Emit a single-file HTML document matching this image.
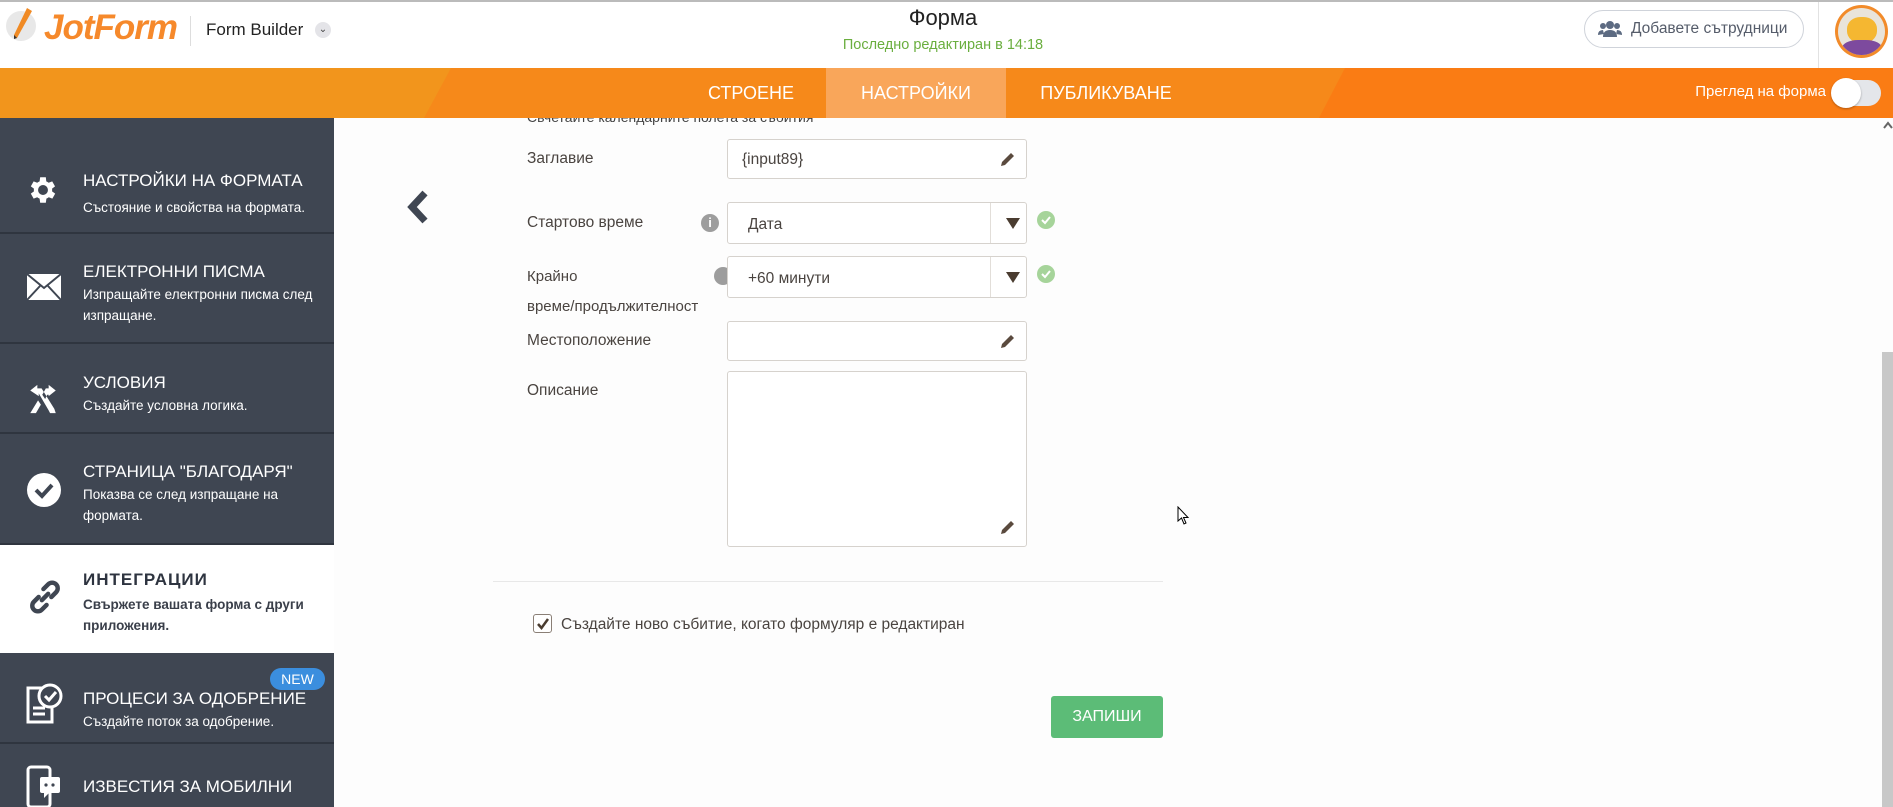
<!DOCTYPE html>
<html style="width:1893px;height:807px;overflow:hidden"><head><meta charset="utf-8"><style>
*{margin:0;padding:0;box-sizing:border-box}
body{width:1893px;height:807px;overflow:hidden;background:#fdfdfd;font-family:"Liberation Sans",sans-serif;position:relative}
.a{position:absolute}
.n{font-family:"Liberation Sans",sans-serif}
.hdr{left:0;top:0;width:1893px;height:68px;background:#fff;border-top:2px solid #bbb}
.bar{left:0;top:68px;width:1893px;height:50px;background:#f6891a;z-index:3;overflow:hidden}
.tab{top:0;height:50px;line-height:50px;color:#fff;font-size:18px;text-align:center}
.side{left:0;top:118px;width:334px;height:689px;background:#3f4652;overflow:hidden}
.it{position:absolute;left:0;width:334px;border-bottom:2px solid #2f353f;color:#fff}
.it .t{position:absolute;left:83px;font-size:17px;white-space:nowrap}
.it .s{position:absolute;left:83px;font-size:13.5px;line-height:21px;width:250px}
.ico{position:absolute;left:26px}
.lbl{color:#4a4440;font-size:15.5px;left:527px}
.inp{left:727px;width:300px;border:1px solid #d6d2cd;border-radius:3px;background:#fff}
.chk{width:18px;height:18px;border-radius:50%;background:#a6d49a}
</style></head><body>
<div class="a hdr"></div>
<svg class="a" style="left:5px;top:6px" width="34" height="38" viewBox="0 0 34 38"><circle cx="16" cy="20" r="15" fill="#e8e8e8"/><path d="M22 2 L27 5 L12 32 L9 33 L9 29 Z" fill="#f08a24"/><path d="M9 29 L12 32 L9 33Z" fill="#333"/></svg>
<div class="a" style="left:44px;top:8px;font-size:35px;font-weight:bold;font-style:italic;color:#f6892b;letter-spacing:-1px">JotForm</div>
<div class="a" style="left:190px;top:16px;width:1px;height:30px;background:#ddd"></div>
<div class="a" style="left:206px;top:20px;font-size:17px;color:#222">Form Builder</div>
<div class="a" style="left:315px;top:22px;width:16px;height:16px;border-radius:50%;background:#e4e4e8;font-size:10px;text-align:center;line-height:16px;color:#444">&#8964;</div>
<div class="a" style="left:843px;top:5px;width:200px;text-align:center;font-size:22px;color:#222">Форма</div>
<div class="a" style="left:793px;top:37px;width:300px;text-align:center;font-size:14.5px;color:#6aae3e">Последно редактиран в 14:18</div>
<div class="a" style="left:1584px;top:10px;width:220px;height:38px;border:1px solid #cfd3da;border-radius:19px;font-size:15.5px;color:#555c6a;line-height:36px;padding-left:46px;white-space:nowrap">Добавете сътрудници</div>
<svg class="a" style="left:1598px;top:20px" width="24" height="18" viewBox="0 0 24 18"><circle cx="12" cy="5" r="4" fill="#5d6b82"/><circle cx="5" cy="6" r="3" fill="#5d6b82"/><circle cx="19" cy="6" r="3" fill="#5d6b82"/><path d="M5 17 Q5 10 12 10 Q19 10 19 17Z M0 15 Q0 10 5 10 L6 14Z M24 15 Q24 10 19 10 L18 14Z" fill="#5d6b82"/></svg>
<div class="a" style="left:1818px;top:2px;width:1px;height:66px;background:#e2e2e2"></div>
<div class="a" style="left:1835px;top:5px;width:53px;height:53px;border-radius:50%;background:#f28b2a;overflow:hidden"><div class="a" style="left:3px;top:3px;width:47px;height:47px;border-radius:50%;background:#e9e4da;overflow:hidden"><div class="a" style="left:9px;top:9px;width:30px;height:26px;border-radius:45%;background:#f5b731"></div><div class="a" style="left:4px;top:32px;width:40px;height:20px;border-radius:40% 40% 0 0;background:#7d4a9e"></div></div></div>

<div class="a bar">
<svg class="a" style="left:0;top:0" width="1893" height="50"><polygon points="0,0 451,0 424,50 0,50" fill="#f2951c"/><polygon points="1345,0 1893,0 1893,50 1319,50" fill="#fa7c14"/></svg>
<div class="a tab" style="left:690px;width:122px">СТРОЕНЕ</div>
<div class="a tab" style="left:826px;width:180px;background:#f9a65a">НАСТРОЙКИ</div>
<div class="a tab" style="left:1020px;width:172px">ПУБЛИКУВАНЕ</div>
<div class="a" style="right:67px;top:15px;font-size:15px;color:#fff">Преглед на форма</div>
<div class="a" style="left:1832px;top:12px;width:49px;height:26px;border-radius:13px;background:#e4e6ea"></div>
<div class="a" style="left:1831px;top:10px;width:30px;height:30px;border-radius:50%;background:#fff;box-shadow:0 1px 2px rgba(0,0,0,.3)"></div>
</div>

<div class="a side">
<div class="it" style="top:0;height:116px;"><svg class="ico" style="top:55px" width="34" height="34" viewBox="0 0 24 24"><path fill="#fff" d="M19.4 13a7.5 7.5 0 000-2l2.1-1.6-2-3.5-2.5 1a7 7 0 00-1.7-1L15 3h-4l-.4 2.9a7 7 0 00-1.7 1l-2.5-1-2 3.5L6.6 11a7.5 7.5 0 000 2l-2.2 1.6 2 3.5 2.5-1a7 7 0 001.7 1L11 21h4l.4-2.9a7 7 0 001.7-1l2.5 1 2-3.5zM13 15.5a3.5 3.5 0 110-7 3.5 3.5 0 010 7z" transform="translate(-1 0)"/></svg><div class="t" style="top:53px">НАСТРОЙКИ НА ФОРМАТА</div><div class="s" style="top:79px">Състояние и свойства на формата.</div></div>
<div class="it" style="top:116px;height:110px"><svg class="ico" style="top:39px" width="36" height="28" viewBox="0 0 36 28"><rect x="1" y="1" width="34" height="26" fill="#fff"/><path d="M1 1 L18 15 L35 1 M1 27 L14 13 M35 27 L22 13" stroke="#3f4652" stroke-width="2" fill="none"/></svg><div class="t" style="top:28px">ЕЛЕКТРОННИ ПИСМА</div><div class="s" style="top:50px">Изпращайте електронни писма след изпращане.</div></div>
<div class="it" style="top:226px;height:90px"><svg class="ico" style="top:38px" width="34" height="34" viewBox="0 0 24 24"><path fill="#fff" d="M3 6 L8 2 V4.5 H11 L20 19 L21 22 H17 L16 20 L9 8 V10 Z M21 6 L16 2 V4.5 H14 L11.5 9 L13.5 12 L15 9 H16 V10 Z M3 22 H7 L10.5 16 L8.5 13 Z"/></svg><div class="t" style="top:29px">УСЛОВИЯ</div><div class="s" style="top:51px">Създайте условна логика.</div></div>
<div class="it" style="top:316px;height:111px"><svg class="ico" style="top:38px" width="36" height="36" viewBox="0 0 36 36"><circle cx="18" cy="18" r="17" fill="#fff"/><path d="M10 18 L16 24 L26 13" stroke="#3f4652" stroke-width="4" fill="none"/></svg><div class="t" style="top:28px">СТРАНИЦА "БЛАГОДАРЯ"</div><div class="s" style="top:50px">Показва се след изпращане на формата.</div></div>
<div class="it" style="top:427px;height:108px;background:#fff;color:#2e3440;border-bottom:none"><svg class="ico" style="top:33px" width="38" height="38" viewBox="0 0 24 24"><g fill="none" stroke="#3f4652" stroke-width="2.8" stroke-linecap="round"><path d="M10 14 L14 10"/><path d="M11 7 L14 4 a3.5 3.5 0 015 5 L16 12"/><path d="M13 17 L10 20 a3.5 3.5 0 01-5-5 L8 12"/></g></svg><div class="t" style="top:25px;font-weight:bold;letter-spacing:1px">ИНТЕГРАЦИИ</div><div class="s" style="top:49px;font-weight:bold;color:#3a3f4a">Свържете вашата форма с други приложения.</div></div>
<div class="it" style="top:535px;height:91px"><svg class="ico" style="top:29px" width="38" height="42" viewBox="0 0 38 42"><rect x="2" y="6" width="24" height="34" fill="none" stroke="#fff" stroke-width="3"/><path d="M7 26h12M7 32h12" stroke="#fff" stroke-width="3"/><circle cx="24" cy="14" r="11" fill="#3f4652" stroke="#fff" stroke-width="3"/><path d="M19 14 L23 18 L30 10" stroke="#fff" stroke-width="3" fill="none"/></svg><div class="t" style="top:36px">ПРОЦЕСИ ЗА ОДОБРЕНИЕ</div><div class="s" style="top:58px">Създайте поток за одобрение.</div>
<div class="a" style="left:270px;top:15px;width:55px;height:22px;border-radius:11px;background:#3b8ede;color:#fff;font-size:14px;text-align:center;line-height:22px">NEW</div></div>
<div class="it" style="top:626px;height:80px;border:none"><svg class="ico" style="top:21px" width="36" height="42" viewBox="0 0 36 42"><rect x="2" y="2" width="22" height="40" rx="3" fill="none" stroke="#fff" stroke-width="3"/><rect x="14" y="12" width="20" height="16" rx="2" fill="#fff"/><path d="M18 28 L18 33 L23 28Z" fill="#fff"/><circle cx="20" cy="20" r="1.6" fill="#3f4652"/><circle cx="27" cy="20" r="1.6" fill="#3f4652"/></svg><div class="t" style="top:26px;line-height:34px">ИЗВЕСТИЯ ЗА МОБИЛНИ<br>УСТРОЙСТВА</div></div>
</div>

<div class="a n" style="left:527px;top:109px;font-size:14px;color:#444;z-index:2">Свчетайте календарните полета за събития</div>
<svg class="a" style="left:405px;top:190px" width="26" height="34" viewBox="0 0 26 34"><path d="M20 3 L7 17 L20 31" stroke="#3f4652" stroke-width="7" fill="none"/></svg>

<div class="a lbl n" style="top:150px">Заглавие</div>
<div class="a inp" style="top:139px;height:40px"><span class="a n" style="left:14px;top:11px;font-size:15.5px;color:#4a4440">{input89}</span><svg class="a" style="right:10px;top:11px" width="17" height="17" viewBox="0 0 17 17"><path d="M2 15 L3 11 L12 2 L15 5 L6 14Z" fill="#5a4a3e"/></svg></div>

<div class="a lbl n" style="top:214px">Стартово време</div>
<div class="a" style="left:701px;top:214px;width:18px;height:18px;border-radius:50%;background:#9d9d9d;color:#fff;font-size:13px;font-weight:bold;text-align:center;line-height:18px">i</div>
<div class="a inp" style="top:202px;height:42px"><span class="a n" style="left:20px;top:13px;font-size:15.5px;color:#4a4440">Дата</span><div class="a" style="left:262px;top:0;width:1px;height:40px;background:#e2ded9"></div><div class="a" style="left:278px;top:15px;width:0;height:0;border-left:7px solid transparent;border-right:7px solid transparent;border-top:11px solid #4a3c30"></div></div>
<div class="a chk" style="left:1037px;top:211px"></div><svg class="a" style="left:1037px;top:211px" width="18" height="18"><path d="M5 9 L8 12 L13 6" stroke="#fff" stroke-width="2" fill="none"/></svg>

<div class="a lbl n" style="top:262px;line-height:30px;font-size:15px">Крайно<br>време/продължителност</div>
<div class="a" style="left:714px;top:267px;width:18px;height:18px;border-radius:50%;background:#9d9d9d"></div>
<div class="a inp" style="top:256px;height:42px"><span class="a n" style="left:20px;top:13px;font-size:15.5px;color:#4a4440">+60 минути</span><div class="a" style="left:262px;top:0;width:1px;height:40px;background:#e2ded9"></div><div class="a" style="left:278px;top:15px;width:0;height:0;border-left:7px solid transparent;border-right:7px solid transparent;border-top:11px solid #4a3c30"></div></div>
<div class="a chk" style="left:1037px;top:265px"></div><svg class="a" style="left:1037px;top:265px" width="18" height="18"><path d="M5 9 L8 12 L13 6" stroke="#fff" stroke-width="2" fill="none"/></svg>

<div class="a lbl n" style="top:332px">Местоположение</div>
<div class="a inp" style="top:321px;height:40px"><svg class="a" style="right:10px;top:11px" width="17" height="17" viewBox="0 0 17 17"><path d="M2 15 L3 11 L12 2 L15 5 L6 14Z" fill="#5a4a3e"/></svg></div>

<div class="a lbl n" style="top:382px">Описание</div>
<div class="a inp" style="top:371px;height:176px"><svg class="a" style="right:10px;bottom:10px" width="17" height="17" viewBox="0 0 17 17"><path d="M2 15 L3 11 L12 2 L15 5 L6 14Z" fill="#5a4a3e"/></svg></div>

<div class="a" style="left:493px;top:581px;width:670px;height:1px;background:#e8e8e8"></div>
<div class="a" style="left:533px;top:614px;width:19px;height:19px;border:1px solid #8a7f76;border-radius:3px;background:#fff"></div>
<svg class="a" style="left:535px;top:616px" width="16" height="16"><path d="M3 8 L6.5 12 L13 3" stroke="#4a3c30" stroke-width="2.5" fill="none"/></svg>
<div class="a n" style="left:561px;top:616px;font-size:15.5px;color:#4a4440">Създайте ново събитие, когато формуляр е редактиран</div>
<div class="a n" style="left:1051px;top:696px;width:112px;height:42px;background:#5cbc77;border-radius:3px;color:#fff;font-size:16px;text-align:center;line-height:42px">ЗАПИШИ</div>

<svg class="a" style="left:1177px;top:506px" width="14" height="20" viewBox="0 0 14 20"><path d="M1 1 L1 15 L4.5 12 L7 18 L9 17 L6.5 11.5 L11 11.5Z" fill="#fff" stroke="#000" stroke-width="1"/></svg>
<svg class="a" style="left:1882px;top:120px" width="11" height="10"><path d="M2 8 L6 3 L10 8" stroke="#666" stroke-width="2" fill="none"/></svg>
<div class="a" style="left:1882px;top:352px;width:11px;height:455px;background:#c8c8c8"></div>
</body></html>
